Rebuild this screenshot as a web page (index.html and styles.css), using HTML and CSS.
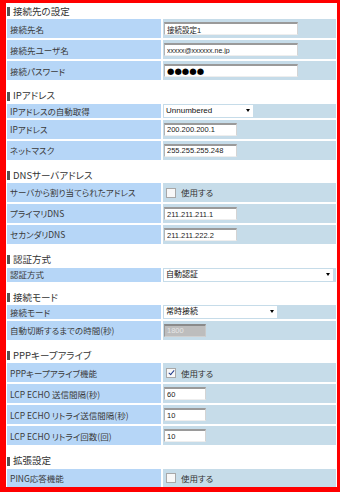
FILE: index.html
```html
<!DOCTYPE html>
<html lang="ja">

<head>
    <meta charset="UTF-8">
    <meta name="viewport" content="width=device-width, initial-scale=1.0">
    <title>接続設定</title>
    <link rel="stylesheet" href="styles.css">
</head>

<body>
    <div class="frame">
        <!-- 接続先の設定 -->
        <div class="section">
            <h2 class="section-title">接続先の設定</h2>
            <div class="rows">
                <div class="row">
                    <div class="label">接続先名</div>
                    <div class="value"><input class="text w-long" type="text" value="接続設定1"></div>
                </div>
                <div class="row">
                    <div class="label">接続先ユーザ名</div>
                    <div class="value"><input class="text w-long small" type="text" value="xxxxx@xxxxxx.ne.jp"></div>
                </div>
                <div class="row">
                    <div class="label">接続パスワード</div>
                    <div class="value"><input class="text w-long dots" type="text" value="●●●●●"></div>
                </div>
            </div>
        </div>

        <!-- IPアドレス -->
        <div class="section">
            <h2 class="section-title">IPアドレス</h2>
            <div class="rows">
                <div class="row short">
                    <div class="label">IPアドレスの自動取得</div>
                    <div class="value">
                        <div class="select w-unnum"><span>Unnumbered</span><span class="arrow"></span></div>
                    </div>
                </div>
                <div class="row">
                    <div class="label">IPアドレス</div>
                    <div class="value"><input class="text w-ip" type="text" value="200.200.200.1"></div>
                </div>
                <div class="row">
                    <div class="label">ネットマスク</div>
                    <div class="value"><input class="text w-ip" type="text" value="255.255.255.248"></div>
                </div>
            </div>
        </div>

        <!-- DNSサーバアドレス -->
        <div class="section">
            <h2 class="section-title">DNSサーバアドレス</h2>
            <div class="rows">
                <div class="row">
                    <div class="label">サーバから割り当てられたアドレス</div>
                    <div class="value"><label class="check"><input type="checkbox">使用する</label></div>
                </div>
                <div class="row">
                    <div class="label">プライマリDNS</div>
                    <div class="value"><input class="text w-ip" type="text" value="211.211.211.1"></div>
                </div>
                <div class="row">
                    <div class="label">セカンダリDNS</div>
                    <div class="value"><input class="text w-ip" type="text" value="211.211.222.2"></div>
                </div>
            </div>
        </div>

        <!-- 認証方式 -->
        <div class="section">
            <h2 class="section-title">認証方式</h2>
            <div class="rows">
                <div class="row short">
                    <div class="label">認証方式</div>
                    <div class="value">
                        <div class="select w-full"><span>自動認証</span><span class="arrow"></span></div>
                    </div>
                </div>
            </div>
        </div>

        <!-- 接続モード -->
        <div class="section">
            <h2 class="section-title">接続モード</h2>
            <div class="rows">
                <div class="row short">
                    <div class="label">接続モード</div>
                    <div class="value">
                        <div class="select w-mode"><span>常時接続</span><span class="arrow"></span></div>
                    </div>
                </div>
                <div class="row">
                    <div class="label">自動切断するまでの時間(秒)</div>
                    <div class="value"><input class="text w-num" type="text" value="1800" disabled></div>
                </div>
            </div>
        </div>

        <!-- PPPキープアライブ -->
        <div class="section">
            <h2 class="section-title">PPPキープアライブ</h2>
            <div class="rows">
                <div class="row">
                    <div class="label">PPPキープアライブ機能</div>
                    <div class="value"><label class="check"><input type="checkbox" checked>使用する</label></div>
                </div>
                <div class="row">
                    <div class="label">LCP ECHO 送信間隔(秒)</div>
                    <div class="value"><input class="text w-num" type="text" value="60"></div>
                </div>
                <div class="row">
                    <div class="label">LCP ECHO リトライ送信間隔(秒)</div>
                    <div class="value"><input class="text w-num" type="text" value="10"></div>
                </div>
                <div class="row">
                    <div class="label">LCP ECHO リトライ回数(回)</div>
                    <div class="value"><input class="text w-num" type="text" value="10"></div>
                </div>
            </div>
        </div>

        <!-- 拡張設定 -->
        <div class="section">
            <h2 class="section-title">拡張設定</h2>
            <div class="rows">
                <div class="row">
                    <div class="label">PING応答機能</div>
                    <div class="value"><label class="check"><input type="checkbox">使用する</label></div>
                </div>
            </div>
        </div>
    </div>
</body>

</html>
```

FILE: styles.css
```css
body {
    margin: 0;
    font-family: "Noto Sans CJK JP", sans-serif;
    font-feature-settings: "palt";
    color: #333;
    background: #fff;
}

/* 赤い枠 */
.frame {
    width: 340px;
    height: 492px;
    box-sizing: border-box;
    border-style: solid;
    border-color: #ff0000;
    border-width: 3px 3px 5px 6px;
    padding: 1px 1px 0 1px;
    overflow: hidden;
    background: #fff;
}

.section {
    margin-bottom: 8px;
}

.section-title {
    display: flex;
    align-items: center;
    height: 15.4px;
    margin: 0;
    font-size: 9.5px;
    font-weight: normal;
    line-height: 1;
    color: #333;
}

.section-title::before {
    content: "";
    width: 3px;
    height: 9px;
    margin-right: 3px;
    background: #555;
}

.rows {
    display: flex;
    flex-direction: column;
    gap: 2px;
}

.row {
    display: flex;
    gap: 2px;
    height: 19px;
}

.row.short {
    height: 14px;
}

.label {
    width: 154px;
    flex-shrink: 0;
    display: flex;
    align-items: center;
    padding-left: 3px;
    box-sizing: border-box;
    background: #b6d6f7;
    font-size: 8.5px;
    line-height: 1;
    color: #3a3a3a;
    white-space: nowrap;
}

.value {
    flex: 1;
    display: flex;
    align-items: center;
    padding-left: 1px;
    background: #c6dce9;
}

/* テキスト入力 */
.text {
    height: 13px;
    box-sizing: border-box;
    margin: 0;
    padding: 0 2px;
    border-style: solid;
    border-width: 2px 1px 1px 1px;
    border-color: #9a9a9a #d4d4d4 #eeeeee #b4b4b4;
    background: #fff;
    font-family: "Liberation Sans", "Noto Sans CJK JP", sans-serif;
    font-size: 7.5px;
    color: #222;
    outline: none;
}

.text.small {
    font-size: 7px;
}

.text.dots {
    font-family: "DejaVu Sans", sans-serif;
    font-size: 8.5px;
    color: #000;
    letter-spacing: 0;
}

.text:disabled {
    background: #bdbdbd;
    color: #e6e6e6;
    border-color: #8a8a8a #c8c8c8 #d0d0d0 #9a9a9a;
}

.w-long { width: 134px; }
.w-ip { width: 73px; }
.w-num { width: 42px; }

/* セレクト */
.select {
    height: 12px;
    display: flex;
    align-items: center;
    justify-content: space-between;
    padding: 0 3px 0 2px;
    box-sizing: border-box;
    background: #fff;
    font-family: "Liberation Sans", "Noto Sans CJK JP", sans-serif;
    font-size: 8px;
    line-height: 1;
    color: #111;
}

.select .arrow {
    width: 0;
    height: 0;
    border-left: 2px solid transparent;
    border-right: 2px solid transparent;
    border-top: 3px solid #000;
}

.w-unnum { width: 89px; }
.w-mode { width: 113px; }
.w-full { width: 169px; }

/* チェックボックス */
.check {
    display: flex;
    align-items: center;
    gap: 5px;
    padding-left: 2px;
    font-size: 8.5px;
    line-height: 1;
    color: #333;
}

.check input {
    appearance: none;
    width: 10px;
    height: 10px;
    margin: 0;
    box-sizing: border-box;
    border: 1px solid #a8a8a8;
    background: #f8f8f8;
}

.check input:checked::after {
    content: "";
    display: block;
    width: 2px;
    height: 5px;
    margin: 0 0 0 2.5px;
    border: solid #203c8c;
    border-width: 0 1.5px 1.5px 0;
    transform: rotate(40deg);
}
```
